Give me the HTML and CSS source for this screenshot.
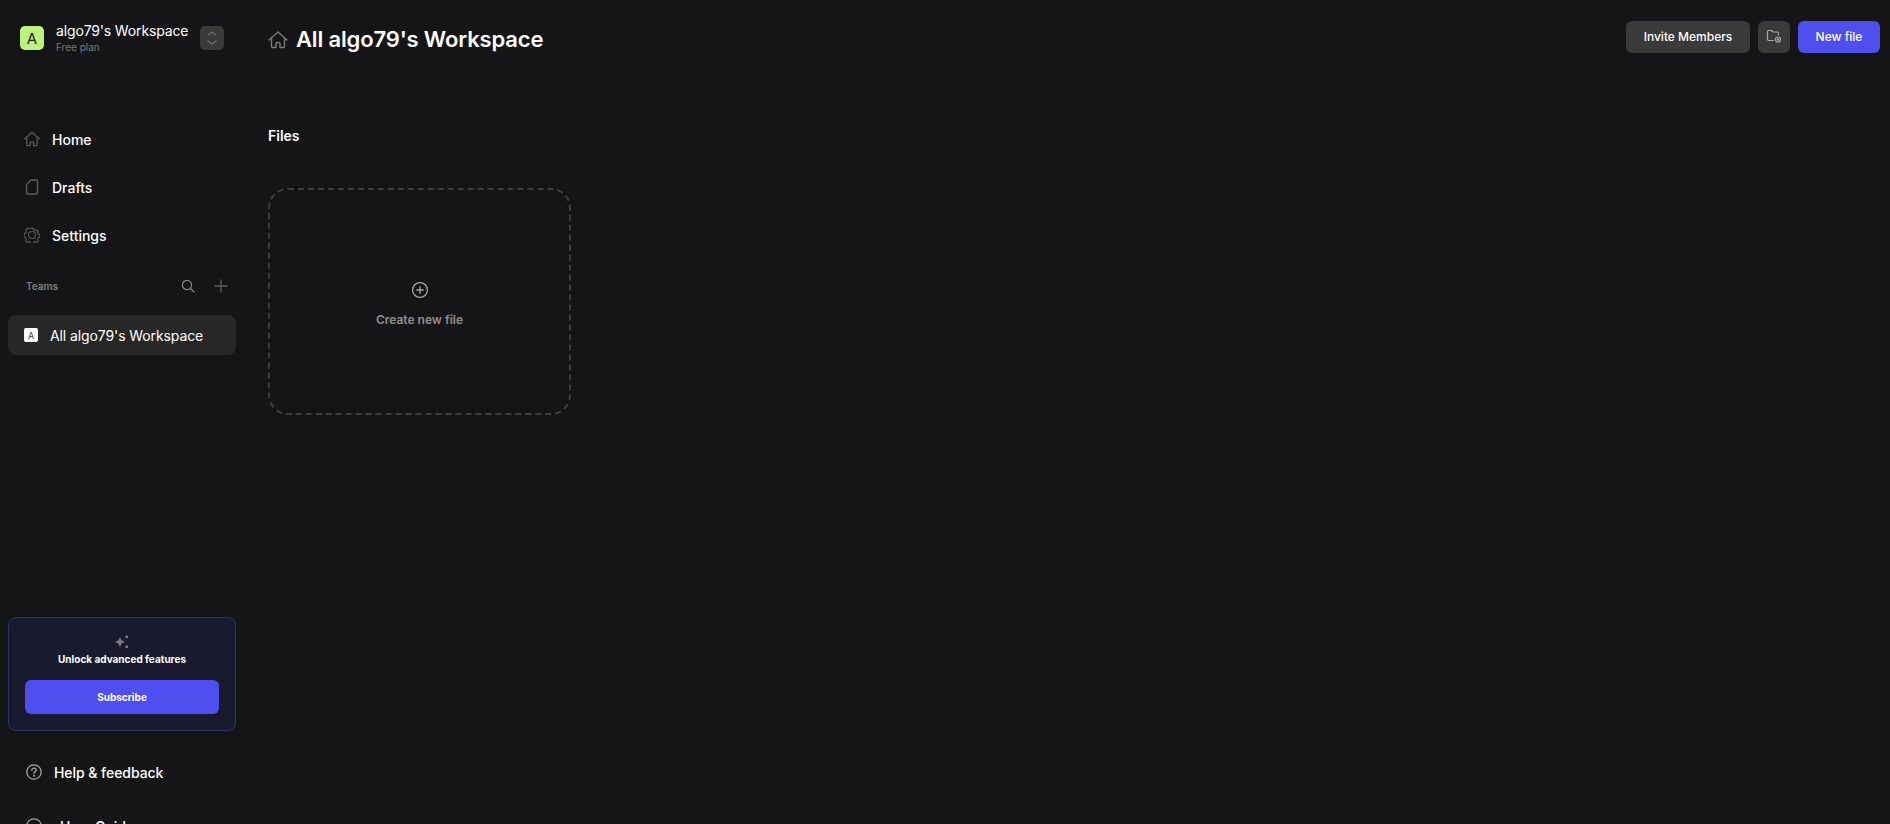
FILE: index.html
```html
<!DOCTYPE html>
<html lang="en">
<head>
  <meta charset="UTF-8">
  <meta name="viewport" content="width=device-width, initial-scale=1.0">
  <title>All algo79's Workspace</title>
  <link rel="stylesheet" href="styles.css">
</head>
<body>

  <div class="app">
    <aside class="sidebar">
      <div class="workspace-switch">
        <div class="avatar">A</div>
        <div class="workspace-info">
          <div class="workspace-name">algo79's Workspace</div>
          <div class="workspace-plan">Free plan</div>
        </div>
        <button class="switch-button" aria-label="Switch workspace">
          <svg width="14" height="20" viewBox="0 0 14 20" fill="none" stroke="#6e6e6e" stroke-width="1.200" stroke-linecap="round" stroke-linejoin="round"><path d="M3 7 7 4l4 3"/><path d="M3 13 7 16l4-3"/></svg>
        </button>
      </div>

      <nav class="main-nav">
        <a class="nav-item">
          <svg class="nav-icon" viewBox="0 0 16 16" fill="none" stroke="#5c5c5c" stroke-width="1.200" stroke-linejoin="round" stroke-linecap="round"><path d="M.7 8 8 1.300 15.300 8"/><path d="M2.800 6.500v7.300c0 .5.300.8.800.8h2.600v-3c0-.5.300-.8.800-.8h1.800c.5 0 .8.300.8.800v3h2.600c.5 0 .8-.3.800-.8V6.500"/></svg>
          <span>Home</span>
        </a>
        <a class="nav-item">
          <svg class="nav-icon" viewBox="0 0 16 16" fill="none" stroke="#5c5c5c" stroke-width="1.400" stroke-linejoin="round"><path d="M7 1h5.500c.6 0 1 .4 1 1v12c0 .6-.4 1-1 1h-9c-.6 0-1-.4-1-1V5.500z"/></svg>
          <span>Drafts</span>
        </a>
        <a class="nav-item">
          <svg class="nav-icon" viewBox="0 0 18 18" fill="none" stroke="#5c5c5c" stroke-width="1.200" stroke-linejoin="round"><circle cx="9" cy="9" r="3.900"/><path d="M7.600 1.300h2.800l.5 1.900 1.600.7 1.700-1 2 2-1 1.700.7 1.600 1.900.5v2.800l-1.900.5-.7 1.600 1 1.700-2 2-1.700-1-1.600.7-.5 1.900H7.600l-.5-1.900-1.600-.7-1.700 1-2-2 1-1.700-.7-1.600-1.900-.5V7.200l1.900-.5.7-1.600-1-1.700 2-2 1.700 1 1.600-.7z"/></svg>
          <span>Settings</span>
        </a>
      </nav>

      <div class="teams-head">
        <span class="teams-label">Teams</span>
        <svg class="teams-search" width="14" height="14" viewBox="0 0 14 14" fill="none" stroke="#8a8a8a" stroke-width="1.200" stroke-linecap="round"><circle cx="6" cy="6" r="4.600"/><path d="m9.500 9.500 3.500 3.500"/></svg>
        <svg class="teams-add" width="14" height="14" viewBox="0 0 14 14" fill="none" stroke="#5f5f5f" stroke-width="1.300" stroke-linecap="round"><path d="M7 1v12M1 7h12"/></svg>
      </div>

      <a class="team-item">
        <span class="team-badge">A</span>
        <span>All algo79's Workspace</span>
      </a>

      <div class="sidebar-space"></div>

      <div class="promo-card">
        <svg class="promo-icon" width="18" height="18" viewBox="0 0 18 18" fill="#7b7b7b"><path d="M7 3.500c.7 3.300 2 4.800 5.500 5.500-3.500.7-4.800 2.200-5.500 5.500-.7-3.300-2-4.800-5.500-5.500C5 8.300 6.300 6.800 7 3.500z"/><circle cx="13.800" cy="3.800" r="1.500"/><circle cx="13.800" cy="13.800" r="1.500"/></svg>
        <div class="promo-text">Unlock advanced features</div>
        <button class="subscribe-button">Subscribe</button>
      </div>

      <a class="foot-item">
        <svg class="nav-icon" viewBox="0 0 16 16" fill="none" stroke="#a3a3a3" stroke-width="1.300" stroke-linecap="round"><circle cx="8" cy="8" r="7.200"/><path d="M5.800 6.200C5.900 5 6.800 4.200 8 4.200c1.300 0 2.200.8 2.200 1.900 0 1.700-2.200 1.700-2.200 3.300"/><circle cx="8" cy="11.700" r=".4" fill="#a3a3a3"/></svg>
        <span>Help &amp; feedback</span>
      </a>
      <a class="foot-item foot-guide">
        <svg class="nav-icon" viewBox="0 0 16 16" fill="none" stroke="#a3a3a3" stroke-width="1.300"><circle cx="8" cy="8" r="7.200"/></svg>
        <span>User Guide</span>
      </a>
    </aside>

    <main class="content">
      <header class="page-header">
        <svg class="title-icon" viewBox="0 0 20 20" fill="none" stroke="#7a7a7a" stroke-width="1.400" stroke-linejoin="round" stroke-linecap="round"><path d="M1 10 10 2l9 8"/><path d="M3.500 8v8.500c0 .6.400 1 1 1H8v-4c0-.6.400-1 1-1h2c.6 0 1 .4 1 1v4h3.500c.6 0 1-.4 1-1V8"/></svg>
        <h1>All algo79's Workspace</h1>
        <div class="header-actions">
          <button class="btn btn-dark">Invite Members</button>
          <button class="btn btn-dark btn-icon" aria-label="Folder settings">
            <svg width="16" height="16" viewBox="0 0 16 16" fill="none" stroke="#a8a8a8" stroke-width="1.200" stroke-linejoin="round"><path d="M8 12.500H2.700c-.7 0-1.200-.5-1.200-1.200V3.700c0-.7.500-1.200 1.200-1.200h2.800l1.400 1.500h4.400c.7 0 1.200.5 1.200 1.200v2"/><circle cx="12" cy="11.500" r="2.500"/><circle cx="12" cy="11.500" r=".6" fill="#a8a8a8"/></svg>
          </button>
          <button class="btn btn-primary">New file</button>
        </div>
      </header>

      <h2 class="section-title">Files</h2>

      <div class="create-card">
        <svg width="18" height="18" viewBox="0 0 18 18" fill="none" stroke="#a6a6a6" stroke-width="1.300" stroke-linecap="round"><circle cx="9" cy="9" r="7.400"/><path d="M9 5.800v6.400M5.800 9h6.400"/></svg>
        <span>Create new file</span>
      </div>
    </main>
  </div>

</body>
</html>
```

FILE: styles.css
```css
* {
  box-sizing: border-box;
}
html, body {
  height: 100%;
  overflow: hidden;
}
body {
  margin: 0;
  font-family: Inter, "Liberation Sans", sans-serif;
  background-color: #151517;
  color: #fff;
}
button {
  font-family: inherit;
  border: none;
  cursor: pointer;
}
.app {
  display: flex;
  align-items: flex-start;
}

/* sidebar */
.sidebar {
  width: 244px;
  height: 870px;
  flex-shrink: 0;
  padding: 26px 8px 0;
  display: flex;
  flex-direction: column;
}
.workspace-switch {
  display: flex;
  align-items: center;
  height: 24px;
  padding-left: 12px;
}
.avatar {
  width: 24px;
  height: 24px;
  border-radius: 5px;
  background-color: #bef27d;
  color: #222;
  font-size: 15px;
  display: flex;
  align-items: center;
  justify-content: center;
  flex-shrink: 0;
}
.workspace-info {
  margin-left: 12px;
  width: 144px;
  flex-shrink: 0;
}
.workspace-name {
  font-size: 14px;
  line-height: 17px;
  letter-spacing: -0.15px;
  white-space: nowrap;
}
.workspace-plan {
  font-size: 10px;
  line-height: 14px;
  color: #777;
  margin-top: 1px;
}
.switch-button {
  width: 24px;
  height: 24px;
  border-radius: 5px;
  background-color: #3a3a3a;
  padding: 0;
  display: flex;
  align-items: center;
  justify-content: center;
}
.main-nav {
  margin-top: 65px;
}
.nav-item {
  height: 48px;
  display: flex;
  align-items: center;
  gap: 12px;
  padding-left: 16px;
  font-size: 14px;
  font-weight: 500;
}
.nav-icon {
  width: 16px;
  height: 16px;
  flex-shrink: 0;
}
.teams-head {
  display: flex;
  align-items: center;
  height: 20px;
  margin-top: 17px;
  padding-left: 18px;
}
.teams-label {
  font-size: 10px;
  font-weight: 600;
  color: #7f7f7f;
  width: 155px;
}
.teams-add {
  margin-left: 19px;
}
.team-item {
  height: 40px;
  margin-top: 19px;
  border-radius: 8px;
  background-color: #272727;
  display: flex;
  align-items: center;
  gap: 12px;
  padding-left: 16px;
  font-size: 14px;
  letter-spacing: -0.1px;
}
.team-badge {
  width: 14px;
  height: 14px;
  border-radius: 2px;
  background-color: #fff;
  color: #333;
  font-size: 9px;
  display: flex;
  align-items: center;
  justify-content: center;
}
.sidebar-space {
  height: 262px;
  flex-shrink: 0;
}
.promo-card {
  height: 114px;
  border: 1px solid #2f2f70;
  border-radius: 8px;
  background-color: #1a1a2e;
  padding: 15px 16px 0;
  display: flex;
  flex-direction: column;
  align-items: center;
}
.promo-text {
  font-size: 10px;
  font-weight: 700;
  line-height: 14px;
  margin-top: 1px;
}
.subscribe-button {
  width: 194px;
  height: 34px;
  margin-top: 14px;
  border-radius: 6px;
  background-color: #4f4ff0;
  color: #fff;
  font-size: 10px;
  font-weight: 700;
}
.foot-item {
  display: flex;
  align-items: center;
  gap: 12px;
  height: 48px;
  margin-top: 17px;
  padding-left: 18px;
  font-size: 14px;
  font-weight: 500;
  letter-spacing: -0.05px;
}
.foot-guide {
  margin-top: 6px;
  gap: 18px;
}

/* main area */
.content {
  flex: 1;
  padding: 21px 10px 0 24px;
}
.page-header {
  display: flex;
  align-items: center;
  height: 32px;
  gap: 8px;
}
.title-icon {
  width: 20px;
  height: 20px;
  margin-top: 5px;
}
.page-header h1 {
  margin: 4px 0 0;
  font-size: 22px;
  font-weight: 600;
  line-height: 32px;
  letter-spacing: -0.15px;
}
.header-actions {
  margin-left: auto;
  display: flex;
  gap: 8px;
}
.btn {
  height: 32px;
  border-radius: 6px;
  color: #fff;
  font-size: 12px;
  font-weight: 500;
  padding: 0 0 2px;
}
.btn-dark {
  width: 124px;
  background-color: #3a3a3a;
}
.btn-icon {
  width: 32px;
  display: flex;
  align-items: center;
  justify-content: center;
}
.btn-primary {
  width: 82px;
  background-color: #4f4ff0;
}
.section-title {
  margin: 74px 0 0;
  font-size: 14px;
  font-weight: 600;
  line-height: 18px;
}
.create-card {
  width: 303px;
  height: 227px;
  margin-top: 43px;
  border: 2px dashed #3d3d3d;
  border-radius: 20px;
  display: flex;
  flex-direction: column;
  align-items: center;
  justify-content: center;
  gap: 13px;
  padding-top: 5px;
  color: #8f8f8f;
  font-size: 12px;
  font-weight: 600;
}
```
